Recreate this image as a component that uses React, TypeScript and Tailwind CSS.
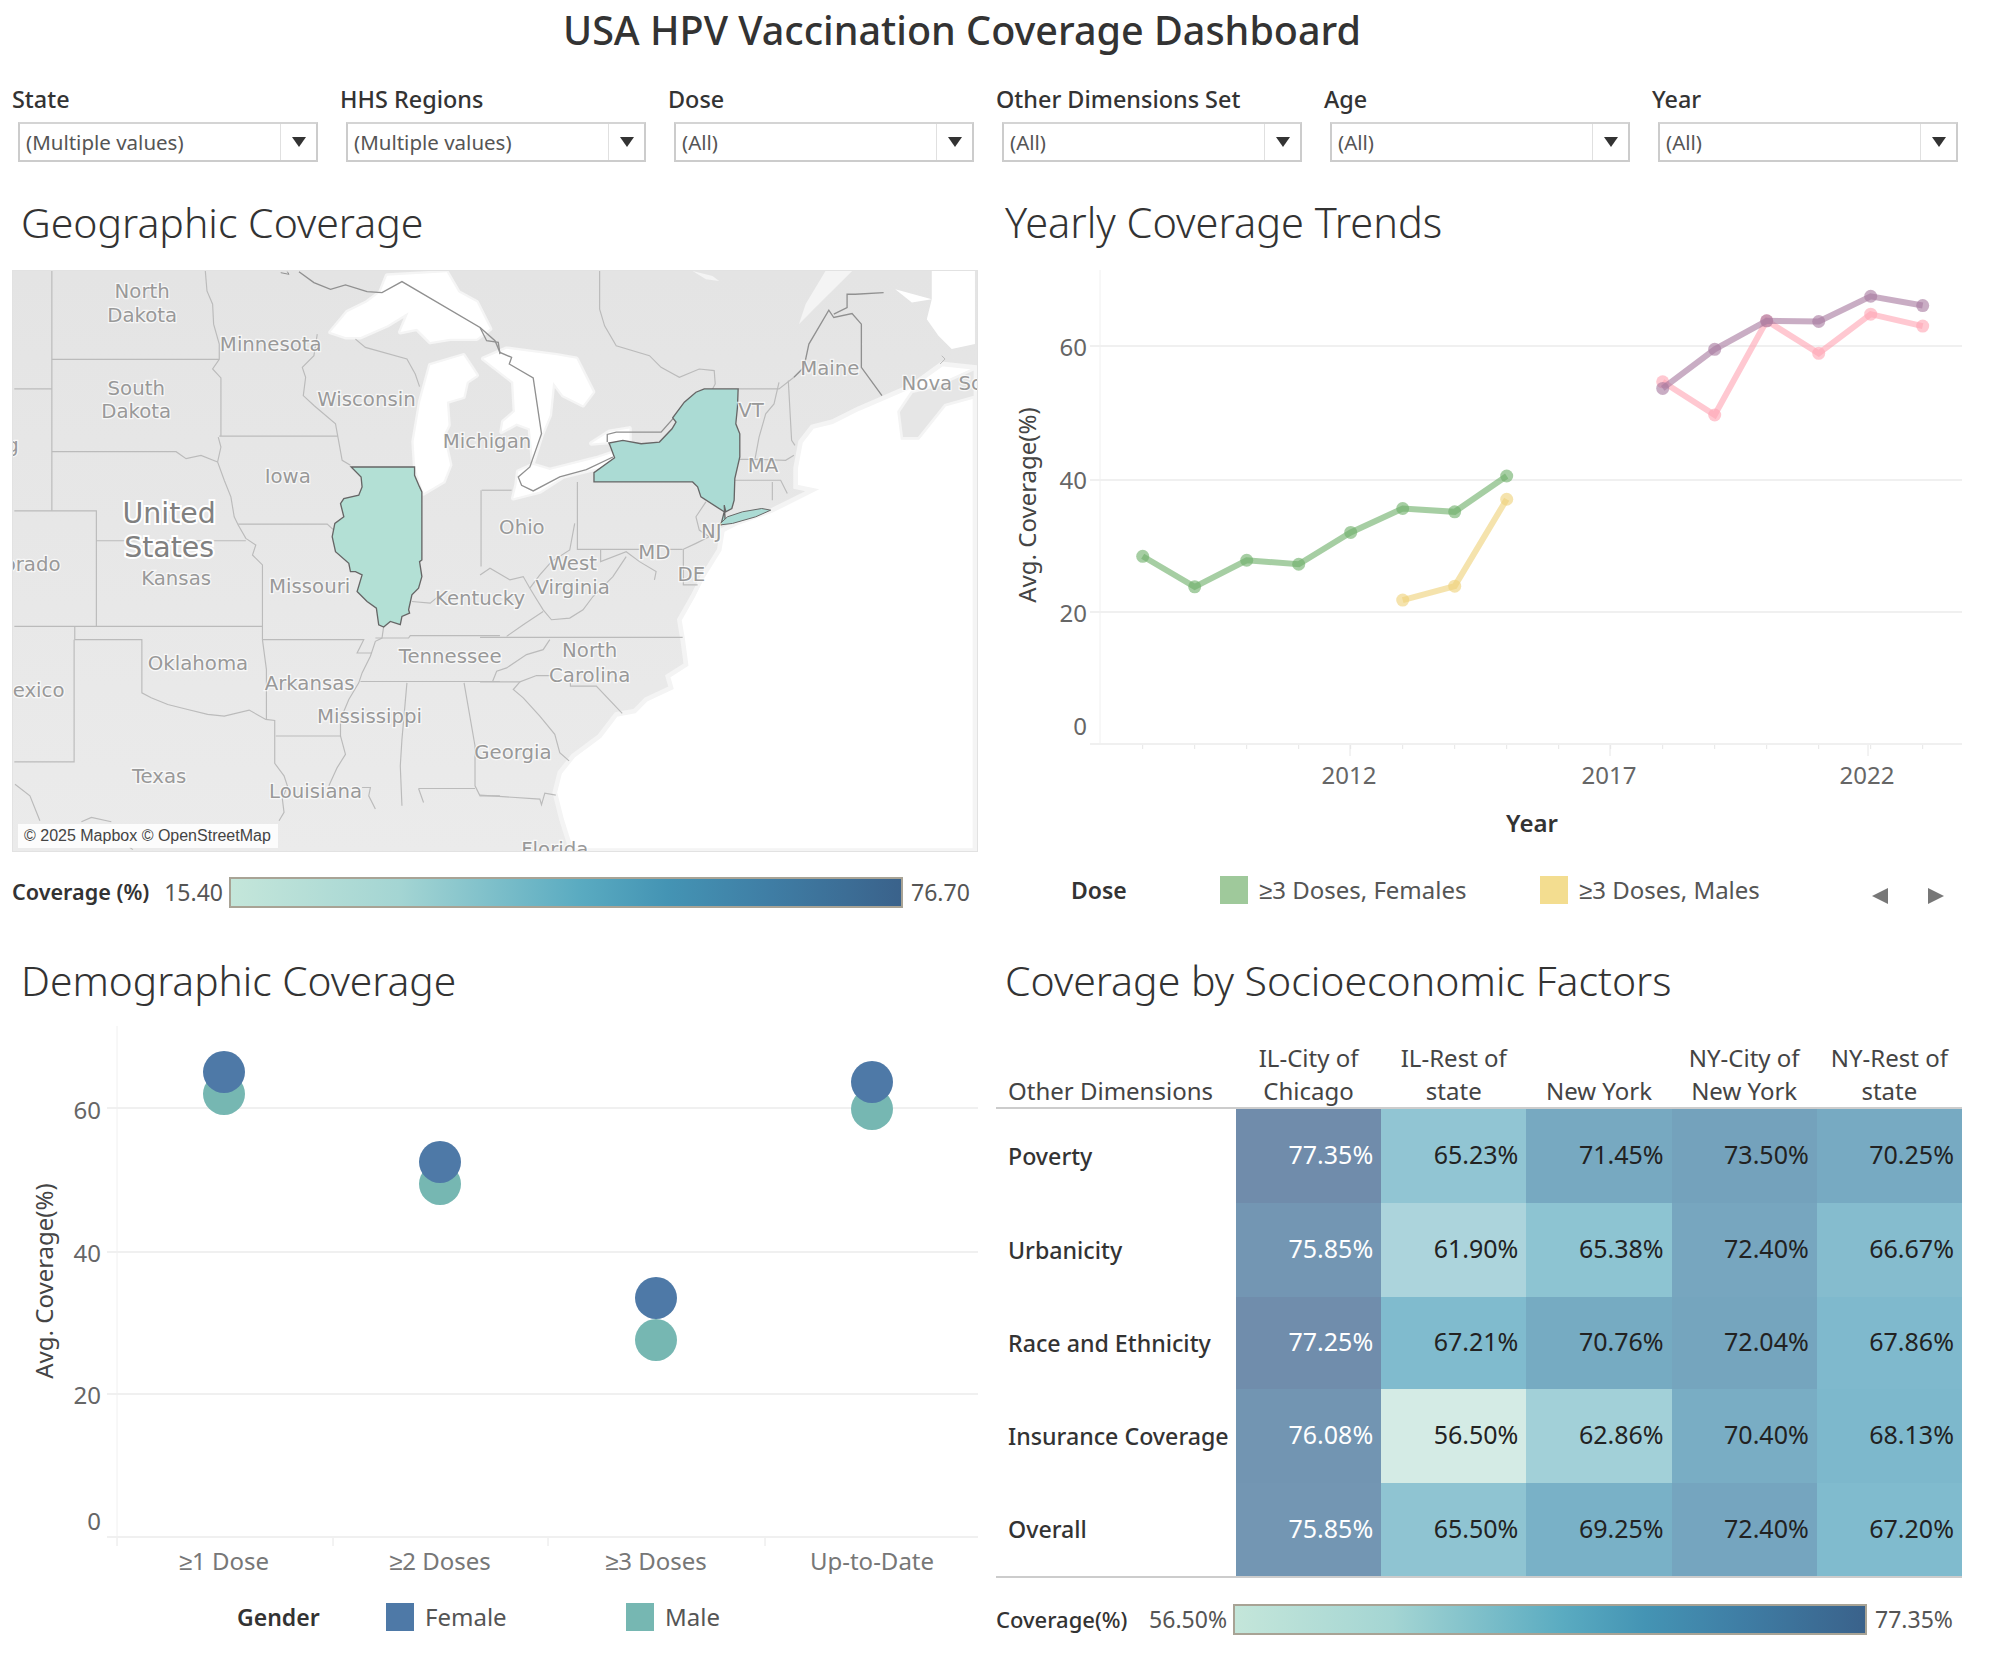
const filters = [
  { label: "State", value: "(Multiple values)" },
  { label: "HHS Regions", value: "(Multiple values)" },
  { label: "Dose", value: "(All)" },
  { label: "Other Dimensions Set", value: "(All)" },
  { label: "Age", value: "(All)" },
  { label: "Year", value: "(All)" },
];

const gradient =
  "bg-[linear-gradient(90deg,#c4e6da,#a4d5d3_25%,#5aabc1_52%,#4494b4_65%,#3f7ea5_80%,#3a628b)]";

const mapLabels: [string, number, number, "start" | "middle" | "end"][] = [
  ["North", 141, 297, "middle"],
  ["Dakota", 141, 321, "middle"],
  ["South", 135, 394, "middle"],
  ["Dakota", 135, 418, "middle"],
  ["Minnesota", 270, 350, "middle"],
  ["Wisconsin", 366, 405, "middle"],
  ["Michigan", 487, 448, "middle"],
  ["Iowa", 287, 483, "middle"],
  ["Kansas", 175, 585, "middle"],
  ["Missouri", 309, 593, "middle"],
  ["Colorado", 59, 571, "end"],
  ["Wyoming", 17, 452, "end"],
  ["Oklahoma", 197, 670, "middle"],
  ["New Mexico", 63, 697, "end"],
  ["Arkansas", 309, 690, "middle"],
  ["Tennessee", 450, 663, "middle"],
  ["Mississippi", 369, 724, "middle"],
  ["Texas", 158, 784, "middle"],
  ["Louisiana", 315, 799, "middle"],
  ["Georgia", 513, 760, "middle"],
  ["North", 590, 657, "middle"],
  ["Carolina", 590, 682, "middle"],
  ["Florida", 555, 857, "middle"],
  ["Ohio", 522, 534, "middle"],
  ["West", 573, 570, "middle"],
  ["Virginia", 573, 594, "middle"],
  ["Kentucky", 480, 605, "middle"],
  ["Maine", 831, 374, "middle"],
  ["Nova Scotia", 903, 389, "start"],
  ["VT", 752, 417, "middle"],
  ["MA", 764, 472, "middle"],
  ["NJ", 712, 538, "middle"],
  ["MD", 655, 559, "middle"],
  ["DE", 692, 581, "middle"],
];

// traced at 3x, left half of the map (x = px * 3, y = (py - 260) * 3)
const bordersLeft = [
  "M151 30V752",
  "M151 296H655",
  "M38 385H151",
  "M613 30L618 90L635 130L638 190L655 250V296L635 325L660 352V527",
  "M151 574H525L555 595L600 585L650 605",
  "M655 527H1012",
  "M652 530L660 560L650 605L670 660L690 710L700 770L712 795L735 835L765 855L755 885L785 915V1140",
  "M38 752H285V1100",
  "M285 842H735",
  "M38 1100H785",
  "M220 1100V1140H422V1300L450 1315L500 1335L560 1350L620 1365L670 1370L745 1352L795 1380L822 1383V1512L850 1550L860 1580L845 1620L850 1660L835 1685",
  "M218 1140V1508H38",
  "M785 1140L797 1230V1380",
  "M785 1140H1090L1070 1180H1115",
  "M1150 1100L1145 1135L1125 1145L1110 1190L1085 1240L1075 1270L1045 1320L1020 1380V1430L1035 1485L1010 1525L985 1580",
  "M1125 1135H1225L1230 1128H1500",
  "M1080 1266H1500",
  "M1220 1270L1205 1440L1200 1520L1205 1640",
  "M1392 1270L1425 1460V1580L1440 1610H1500",
  "M1255 1588H1425M1255 1588L1270 1630",
  "M1020 1430H825",
  "M1085 1585H1110L1105 1610L1125 1650",
  "M40 1575L85 1610L115 1685",
  "M240 1688L270 1675L330 1688",
  "M385 1765L395 1772",
  "M712 792H980L1000 810",
  "M950 220L940 285L905 320L915 350L908 405L940 435L1005 490L1015 545L1025 600L1050 615",
  "M1065 235L1095 260L1220 295L1245 340L1258 378",
  "M1235 1025L1290 1030L1320 1005",
];

const bordersRight = [
  "M360 30V145L375 195L410 255L510 285L545 320L600 350L660 325L705 330L708 370L700 385",
  "M777 385H900L945 350",
  "M928 360L938 540L948 555",
  "M900 365L885 430L860 460L840 530L828 595",
  "M780 597H830L920 600L945 585",
  "M768 660H905L925 700",
  "M880 665V720",
  "M293 665V868H480M560 868H610",
  "M5 690H95",
  "M3 690V920",
  "M680 725L650 770L660 810L690 830",
  "M612 868V975H655M612 868L650 850L690 830",
  "M363 868V905L440 875L480 905L530 935L525 960",
  "M440 890L400 950L340 1010L310 1050L270 1075L215 1080L190 1050L165 1010L150 985L130 950L90 960L30 925L0 945",
  "M285 790L270 870L215 905L180 945L150 985",
  "M190 1055L130 1095L80 1130",
  "M0 1133H610",
  "M210 1140L190 1170L140 1185L80 1225L50 1235L38 1265",
  "M0 1267H120L170 1248H215",
  "M120 1267L100 1290L130 1315L180 1370L225 1425L240 1480L268 1505",
  "M272 1270V1280H350L428 1362",
  "M0 1608L180 1620L185 1637L195 1602L228 1608",
];

const countryRight = [
  "M0 200L45 240L60 275L95 290L88 310L160 352L185 520L150 620L115 650L125 675L160 692L240 650L320 628L400 590",
  "M383 545V522L410 515H545L585 470",
  "M945 350L975 320L990 250L1050 148L1065 170L1120 158L1148 190V320L1170 350L1210 405",
  "M1065 160L1105 140V100H1130L1215 95",
];

const ocean =
  "M1210 414L1300 375L1390 310L1490 320V1775H275L245 1680L225 1600L240 1540L280 1490L360 1430L410 1365L465 1355L500 1320L575 1285L565 1250L620 1215L610 1140L600 1080L640 1010L670 950L720 870L730 810L770 790L880 750L1000 690L950 680V624L965 544L1000 499L1060 484L1140 444Z";

const lakes = [
  "M0 190L50 130L110 100L150 70L170 20L350 10L385 70L440 100L480 180L440 210L360 210L300 220L260 180L210 190L235 130L170 170L90 205L45 205Z",
  "M250 520L270 400L300 290L400 260L440 320L410 340L400 385L350 400L355 470L340 500L360 590L340 640L280 675L255 600Z",
  "M460 270L530 240L680 260L740 270L790 370L760 410L700 380L670 340L660 440L635 500L610 580L600 480L560 465L515 490L520 460L555 430L550 340Z",
  "M560 650L565 610L610 590L660 605L800 570L860 550L850 590L780 605L700 625L630 670L550 690Z",
  "M785 525L840 490L900 480V520L850 520Z",
];

const illinois =
  "M1052 620H1243V645L1258 680L1265 695V900L1258 905L1265 950L1255 985L1235 1005L1225 1050L1228 1060L1205 1070L1200 1095L1170 1085L1150 1102L1135 1095L1128 1045L1100 1025L1070 995L1085 945L1065 935L1050 935L1045 910L1005 875L995 830L1003 790L1030 770L1020 730L1030 715L1075 705L1085 680L1082 650Z";
const newYork =
  "M343 665V637L405 592L390 552L388 548L430 540L485 550L540 545L578 505L590 485L580 472L615 425L650 395L675 385H777L775 440L770 490L782 520V590L767 655L765 720L758 745L740 755L735 735L738 780L725 795L735 755L665 710L655 680L640 665Z";
const longIsland = "M718 795L745 770L790 755L848 745L875 750L830 770L760 790Z";

function MapPanel() {
  return (
    <div className="relative h-[582px] border border-[#e2e2e2] overflow-hidden">
      <svg viewBox="12 270 966 582" className="block w-full h-full bg-gradient-to-b from-[#e4e4e4] to-[#ebebeb]">
        <g transform="translate(330 268) scale(0.3333)" fill="#fff" stroke="#f5f5f5" strokeWidth="14" strokeLinejoin="round">
          {lakes.map((d, i) => (
            <path key={i} d={d} />
          ))}
          {lakes.map((d, i) => (
            <path key={i} d={d} stroke="none" />
          ))}
        </g>
        <g transform="translate(480 260) scale(0.3333)">
          <path d={ocean} fill="#fff" stroke="#f4f4f4" strokeWidth="14" />
          <path d="M1260 454L1300 394L1380 374L1490 324V409L1400 434L1320 534L1270 534Z" fill="#e6e6e6" stroke="#f4f4f4" strokeWidth="8" />
          <path d="M1360 24H1490V250L1420 265L1380 225L1345 175L1360 115L1250 85L1300 125L1360 115Z" fill="#fff" />
          <path d="M1390 285L1400 295L1385 310" fill="none" stroke="#bbb" strokeWidth="3" />
          <path d="M640 30L700 45L720 60L680 55Z M1040 30L1120 30L1000 150L960 190L980 130Z" fill="#f4f4f4" />
        </g>
        <g transform="translate(0 260) scale(0.3333)" fill="none" stroke="#bbb" strokeWidth="3.5">
          {bordersLeft.map((d, i) => (
            <path key={i} d={d} />
          ))}
          <path d="M895 32L940 65L990 85L1035 72L1100 92L1145 95L1205 62L1440 200L1460 240L1495 245L1500 280" stroke="#909090" strokeWidth="4" />
          <path d="M840 35L865 40L860 32" stroke="#909090" strokeWidth="3" />
          <path d={illinois} fill="#b3e0d5" stroke="#666" strokeWidth="4" />
        </g>
        <g transform="translate(480 260) scale(0.3333)" fill="none" stroke="#bbb" strokeWidth="3.5">
          {bordersRight.map((d, i) => (
            <path key={i} d={d} />
          ))}
          {countryRight.map((d, i) => (
            <path key={i} d={d} stroke="#909090" strokeWidth="4" />
          ))}
          <path d={newYork} fill="#abdbd4" stroke="#666" strokeWidth="4" />
          <path d={longIsland} fill="#abdbd4" stroke="#666" strokeWidth="3" />
        </g>
        <g className="font-['DejaVu_Sans',sans-serif] text-[19.8px] fill-[#999] stroke-white/70 [stroke-width:2.5px] [paint-order:stroke]">
          {mapLabels.map(([text, x, y, anchor], i) => (
            <text key={i} x={x} y={y} textAnchor={anchor}>
              {text}
            </text>
          ))}
          <text x="168" y="523" textAnchor="middle" className="text-[28.5px] fill-[#808080] stroke-white [stroke-width:4px]">United</text>
          <text x="168" y="557" textAnchor="middle" className="text-[28.5px] fill-[#808080] stroke-white [stroke-width:4px]">States</text>
        </g>
      </svg>
      <div className="absolute left-[5px] bottom-[3px] h-[24px] w-[260px] bg-white/85 pl-[6px] font-['Liberation_Sans',sans-serif] text-[16px] leading-[24px] text-[#444] whitespace-nowrap">
        © 2025 Mapbox © OpenStreetMap
      </div>
    </div>
  );
}

const trendYears = (start: number, vals: number[]) =>
  vals.map((v, i) => [1142.7 + (start + i - 2008) * 52, 744 - v * 6.633]);

const trendSeries = [
  { color: "#6fb06b", pts: trendYears(2008, [28.3, 23.7, 27.7, 27.1, 31.9, 35.5, 35.0, 40.4]) },
  { color: "#efd27a", pts: trendYears(2013, [21.7, 23.8, 36.9]) },
  { color: "#ffa6b4", pts: trendYears(2018, [54.6, 49.6, 63.8, 58.9, 64.8, 63.0]) },
  { color: "#a87a9f", pts: trendYears(2018, [53.6, 59.5, 63.8, 63.7, 67.5, 66.1]) },
];

function TrendChart() {
  const minor = Array.from({ length: 16 }, (_, i) => 1142.7 + i * 52);
  return (
    <svg viewBox="996 270 966 582" className="block h-[582px] w-full text-[24px]">
      <g stroke="#f0f0f0" strokeWidth="2">
        <line x1="1100" x2="1962" y1="346" y2="346" />
        <line x1="1100" x2="1962" y1="480" y2="480" />
        <line x1="1100" x2="1962" y1="612" y2="612" />
        <line x1="1090" x2="1962" y1="744" y2="744" />
        <line x1="1100" x2="1100" y1="270" y2="744" strokeWidth="1" />
        <line x1="1090" x2="1100" y1="346" y2="346" />
        <line x1="1090" x2="1100" y1="480" y2="480" />
        <line x1="1090" x2="1100" y1="612" y2="612" />
      </g>
      <g stroke="#e6e6e6" strokeWidth="1">
        {minor.map((x) => (
          <line key={x} x1={x} x2={x} y1="745" y2="749" />
        ))}
        <line x1="1350" x2="1350" y1="745" y2="756" />
        <line x1="1610" x2="1610" y1="745" y2="756" />
        <line x1="1868" x2="1868" y1="745" y2="756" />
      </g>
      <g fill="#666" textAnchor="end">
        <text x="1087" y="356">60</text>
        <text x="1087" y="489">40</text>
        <text x="1087" y="622">20</text>
        <text x="1087" y="735">0</text>
      </g>
      <g fill="#666" textAnchor="middle">
        <text x="1349" y="784">2012</text>
        <text x="1609" y="784">2017</text>
        <text x="1867" y="784">2022</text>
      </g>
      <text x="1532" y="832" textAnchor="middle" fill="#333" fontWeight="600">Year</text>
      <text transform="translate(1036 505) rotate(-90)" textAnchor="middle" fill="#444">Avg. Coverage(%)</text>
      {trendSeries.map((s) => (
        <g key={s.color}>
          <polyline points={s.pts.map((p) => p.join(",")).join(" ")} fill="none" stroke={s.color} strokeWidth="6" opacity="0.62" />
          {s.pts.map(([x, y]) => (
            <circle key={x} cx={x} cy={y} r="6.5" fill={s.color} opacity="0.62" />
          ))}
        </g>
      ))}
    </svg>
  );
}

const demoX = [224, 440, 656, 872];
const demoLabels = ["≥1 Dose", "≥2 Doses", "≥3 Doses", "Up-to-Date"];
const female = [1072, 1162, 1298, 1082];
const male = [1094, 1184, 1340, 1109];

function DemoChart() {
  return (
    <svg viewBox="12 1026 966 548" className="block h-[548px] w-full text-[24px]">
      <g stroke="#f0f0f0" strokeWidth="2">
        <line x1="117" x2="980" y1="1108" y2="1108" />
        <line x1="117" x2="980" y1="1252" y2="1252" />
        <line x1="117" x2="980" y1="1394" y2="1394" />
        <line x1="107" x2="980" y1="1537" y2="1537" />
        <line x1="107" x2="117" y1="1108" y2="1108" />
        <line x1="107" x2="117" y1="1252" y2="1252" />
        <line x1="107" x2="117" y1="1394" y2="1394" />
        <line x1="117" x2="117" y1="1026" y2="1537" strokeWidth="1" />
      </g>
      <g stroke="#e6e6e6" strokeWidth="1">
        <line x1="117" x2="117" y1="1538" y2="1546" />
        <line x1="333" x2="333" y1="1538" y2="1546" />
        <line x1="548" x2="548" y1="1538" y2="1546" />
        <line x1="765" x2="765" y1="1538" y2="1546" />
      </g>
      <g fill="#666" textAnchor="end">
        <text x="101" y="1119">60</text>
        <text x="101" y="1262">40</text>
        <text x="101" y="1404">20</text>
        <text x="101" y="1530">0</text>
      </g>
      <text transform="translate(53 1281) rotate(-90)" textAnchor="middle" fill="#444">Avg. Coverage(%)</text>
      {demoX.map((x, i) => (
        <g key={x}>
          <text x={x} y="1570" textAnchor="middle" fill="#777">{demoLabels[i]}</text>
          <circle cx={x} cy={male[i]} r="21" fill="#76b7b2" />
          <circle cx={x} cy={female[i]} r="21" fill="#4e79a7" />
        </g>
      ))}
    </svg>
  );
}

const columns = [
  ["IL-City of", "Chicago"],
  ["IL-Rest of", "state"],
  ["New York"],
  ["NY-City of", "New York"],
  ["NY-Rest of", "state"],
];

const rows = [
  {
    name: "Poverty",
    h: "h-[94px]",
    cells: [
      ["77.35%", "bg-[#708cab] text-white"],
      ["65.23%", "bg-[#91c5d3]"],
      ["71.45%", "bg-[#77a9c1]"],
      ["73.50%", "bg-[#74a2bc]"],
      ["70.25%", "bg-[#77aac2]"],
    ],
  },
  {
    name: "Urbanicity",
    h: "h-[94px]",
    cells: [
      ["75.85%", "bg-[#7396b3] text-white"],
      ["61.90%", "bg-[#acd4dc]"],
      ["65.38%", "bg-[#8dc4d2]"],
      ["72.40%", "bg-[#77a6bf]"],
      ["66.67%", "bg-[#85bcce]"],
    ],
  },
  {
    name: "Race and Ethnicity",
    h: "h-[92px]",
    cells: [
      ["77.25%", "bg-[#708dac] text-white"],
      ["67.21%", "bg-[#80bbce]"],
      ["70.76%", "bg-[#76abc2]"],
      ["72.04%", "bg-[#75a5be]"],
      ["67.86%", "bg-[#7fb9cd]"],
    ],
  },
  {
    name: "Insurance Coverage",
    h: "h-[94px]",
    cells: [
      ["76.08%", "bg-[#7295b2] text-white"],
      ["56.50%", "bg-[#d4ebe5]"],
      ["62.86%", "bg-[#a2d0d8]"],
      ["70.40%", "bg-[#79adc4]"],
      ["68.13%", "bg-[#7db8cc]"],
    ],
  },
  {
    name: "Overall",
    h: "h-[93px]",
    cells: [
      ["75.85%", "bg-[#7396b3] text-white"],
      ["65.50%", "bg-[#8fc4d2]"],
      ["69.25%", "bg-[#79b1c7]"],
      ["72.40%", "bg-[#75a5bf]"],
      ["67.20%", "bg-[#80bbce]"],
    ],
  },
];

function Heatmap() {
  return (
    <div className="mt-[22px]">
      <div className="flex h-[79px] items-end border-b-2 border-[#ccc] text-[24px] text-[#444]">
        <div className="w-[240px] pl-[12px] leading-[33px] whitespace-nowrap">Other Dimensions</div>
        {columns.map((c) => (
          <div key={c[0]} className="w-[145.2px] text-center leading-[33px] whitespace-nowrap">
            {c.map((l) => (
              <div key={l}>{l}</div>
            ))}
          </div>
        ))}
      </div>
      {rows.map((r) => (
        <div key={r.name} className={`flex ${r.h}`}>
          <div className="flex w-[240px] items-center pl-[12px] text-[23.2px] font-medium text-[#333] whitespace-nowrap">{r.name}</div>
          {r.cells.map(([v, cls]) => (
            <div key={v + cls} className={`flex w-[145.2px] items-center justify-end pr-[8px] pb-[2px] text-[25px] text-[#222] ${cls}`}>
              {v}
            </div>
          ))}
        </div>
      ))}
      <div className="h-[2px] bg-[#ccc]" />
    </div>
  );
}

function Arrow({ dir }: { dir: "left" | "right" }) {
  return (
    <svg width="16" height="16" viewBox="0 0 16 16" className="mt-[12px] fill-[#777]">
      <path d={dir === "left" ? "M16 0V16L0 8Z" : "M0 0V16L16 8Z"} />
    </svg>
  );
}

export default function App() {
  return (
    <div className="w-[1990px] h-[1654px] bg-white overflow-hidden font-['Noto_Sans',sans-serif] text-[#333]">
      <h1 className="h-[60px] pr-[66px] text-center text-[39.5px] font-medium leading-[60px] whitespace-nowrap">USA HPV Vaccination Coverage Dashboard</h1>

      <div className="mt-[25px] grid grid-cols-[repeat(6,328px)] pl-[12px]">
        {filters.map((f) => (
          <div key={f.label}>
            <div className="h-[28px] text-[23.4px] font-medium leading-[28px] whitespace-nowrap">{f.label}</div>
            <div className="ml-[6px] mt-[9px] flex h-[40px] w-[300px] items-center border-2 border-[#ccc] border-t-[#d4d4d4]">
              <div className="flex-1 pl-[6px] text-[20.5px] text-[#555]">{f.value}</div>
              <div className="flex h-full w-[36px] items-center justify-center border-l border-[#e0e0e0]">
                <svg width="14" height="10" viewBox="0 0 14 10" className="fill-[#333]">
                  <path d="M0 0H14L7 10Z" />
                </svg>
              </div>
            </div>
          </div>
        ))}
      </div>

      <div className="grid grid-cols-[966px_966px] gap-x-[18px] pl-[12px]">
        <section>
          <h2 className="mt-[32px] h-[56px] pl-[9px] text-[41px] font-light leading-[56px]">Geographic Coverage</h2>
          <div className="mt-[20px]">
            <MapPanel />
          </div>
          <div className="mt-[25px] flex h-[31px] items-center">
            <span className="w-[147px] text-[21.6px] font-semibold whitespace-nowrap">Coverage (%)</span>
            <span className="w-[64px] text-right text-[23px] text-[#555]">15.40</span>
            <div className={`ml-[6px] h-[31px] w-[674px] border-2 border-[#a8a395] ${gradient}`} />
            <span className="ml-[8px] text-[23px] text-[#555]">76.70</span>
          </div>
        </section>
        <section>
          <h2 className="mt-[32px] h-[56px] pl-[9px] text-[41.5px] font-light leading-[56px]">Yearly Coverage Trends</h2>
          <div className="mt-[20px]">
            <TrendChart />
          </div>
          <div className="mt-[24px] flex h-[28px] items-center text-[24px]">
            <span className="ml-[75px] w-[149px] text-[23px] font-semibold">Dose</span>
            <span className="h-[28px] w-[28px] bg-[#9fc99b]" />
            <span className="ml-[11px] w-[281px] text-[#555] whitespace-nowrap">≥3 Doses, Females</span>
            <span className="h-[28px] w-[28px] bg-[#f3dd90]" />
            <span className="ml-[11px] w-[293px] text-[#555] whitespace-nowrap">≥3 Doses, Males</span>
            <Arrow dir="left" />
            <span className="w-[40px]" />
            <Arrow dir="right" />
          </div>
        </section>

        <section>
          <h2 className="mt-[44px] h-[56px] pl-[9px] text-[40.7px] font-light leading-[56px]">Demographic Coverage</h2>
          <div className="mt-[18px]">
            <DemoChart />
          </div>
          <div className="mt-[29px] flex h-[28px] items-center text-[24px]">
            <span className="ml-[225px] w-[149px] text-[23px] font-semibold">Gender</span>
            <span className="h-[28px] w-[28px] bg-[#4e79a7]" />
            <span className="ml-[11px] w-[201px] text-[#555]">Female</span>
            <span className="h-[28px] w-[28px] bg-[#76b7b2]" />
            <span className="ml-[11px] text-[#555]">Male</span>
          </div>
        </section>
        <section>
          <h2 className="mt-[44px] h-[56px] pl-[9px] text-[41px] font-light leading-[56px] whitespace-nowrap">Coverage by Socioeconomic Factors</h2>
          <Heatmap />
          <div className="mt-[26px] flex h-[31px] items-center">
            <span className="w-[133px] text-[22px] font-medium whitespace-nowrap">Coverage(%)</span>
            <span className="w-[98px] text-[23px] text-[#555] text-right">56.50%</span>
            <div className={`ml-[6px] h-[31px] w-[634px] border-2 border-[#a8a395] ${gradient}`} />
            <span className="ml-[8px] text-[23px] text-[#555] whitespace-nowrap">77.35%</span>
          </div>
        </section>
      </div>
    </div>
  );
}
